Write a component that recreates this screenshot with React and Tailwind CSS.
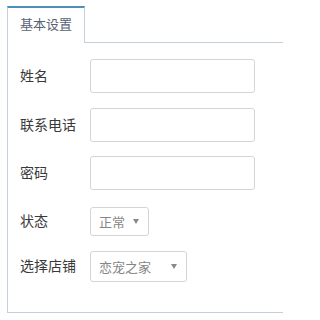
import { useState } from "react";

const fields = [
  { label: "姓名", type: "text" },
  { label: "联系电话", type: "text" },
  { label: "密码", type: "password" },
];

const Caret = () => (
  <svg width="6" height="5" viewBox="0 0 6 5" className="shrink-0">
    <path d="M0 0 L6 0 L3 5 Z" fill="#888" />
  </svg>
);

const FakeSelect = ({ value, width }) => (
  <div
    className={`flex items-center justify-between h-full border border-[#d5d5d5] rounded-[3px] bg-white pl-[8px] pr-[9px] text-[13px] text-[#858585] ${width}`}
  >
    <span>{value}</span>
    <Caret />
  </div>
);

const App = () => {
  const [values, setValues] = useState({});

  return (
    <div
      className="w-[283px] h-[320px] overflow-hidden bg-white pl-[7px] pt-[6px]"
      style={{ fontFamily: '"Noto Sans CJK SC", "Liberation Sans", sans-serif' }}
    >
      <div className="w-[300px]">
        {/* Tabs */}
        <div className="flex">
          <div className="relative z-10 -mb-px h-[37px] flex items-center px-[12px] pb-[3px] bg-white border-t-2 border-t-[#4c8fbd] border-x border-x-[#c5d0dc] text-[13px] text-[#576373]">
            基本设置
          </div>
        </div>

        {/* Tab content */}
        <div className="border-t border-l border-b border-[#c5d0dc] pl-[12px] pt-[16px] pb-[30px]">
          {fields.map((f, i) => (
            <div key={f.label} className={`flex items-center h-[34px] ${i > 0 ? (i === 2 ? "mt-[14px]" : "mt-[15px]") : ""}`}>
              <label className="w-[70px] pb-[2px] text-[14px] text-[#393939]">{f.label}</label>
              <input
                type={f.type}
                value={values[f.label] || ""}
                onChange={e => setValues({ ...values, [f.label]: e.target.value })}
                className="w-[165px] h-full border border-[#d5d5d5] rounded-[3px] px-[6px] text-[13px] text-[#858585] outline-none"
              />
            </div>
          ))}

          <div className="flex items-center h-[29px] mt-[17px]">
            <label className="w-[70px] pb-[2px] text-[14px] text-[#393939]">状态</label>
            <FakeSelect value="正常" width="w-[59px]" />
          </div>

          <div className="flex items-center h-[31px] mt-[15px]">
            <label className="w-[70px] pb-[2px] text-[14px] text-[#393939]">选择店铺</label>
            <FakeSelect value="恋宠之家" width="w-[97px]" />
          </div>
        </div>
      </div>
    </div>
  );
};

export default App;
